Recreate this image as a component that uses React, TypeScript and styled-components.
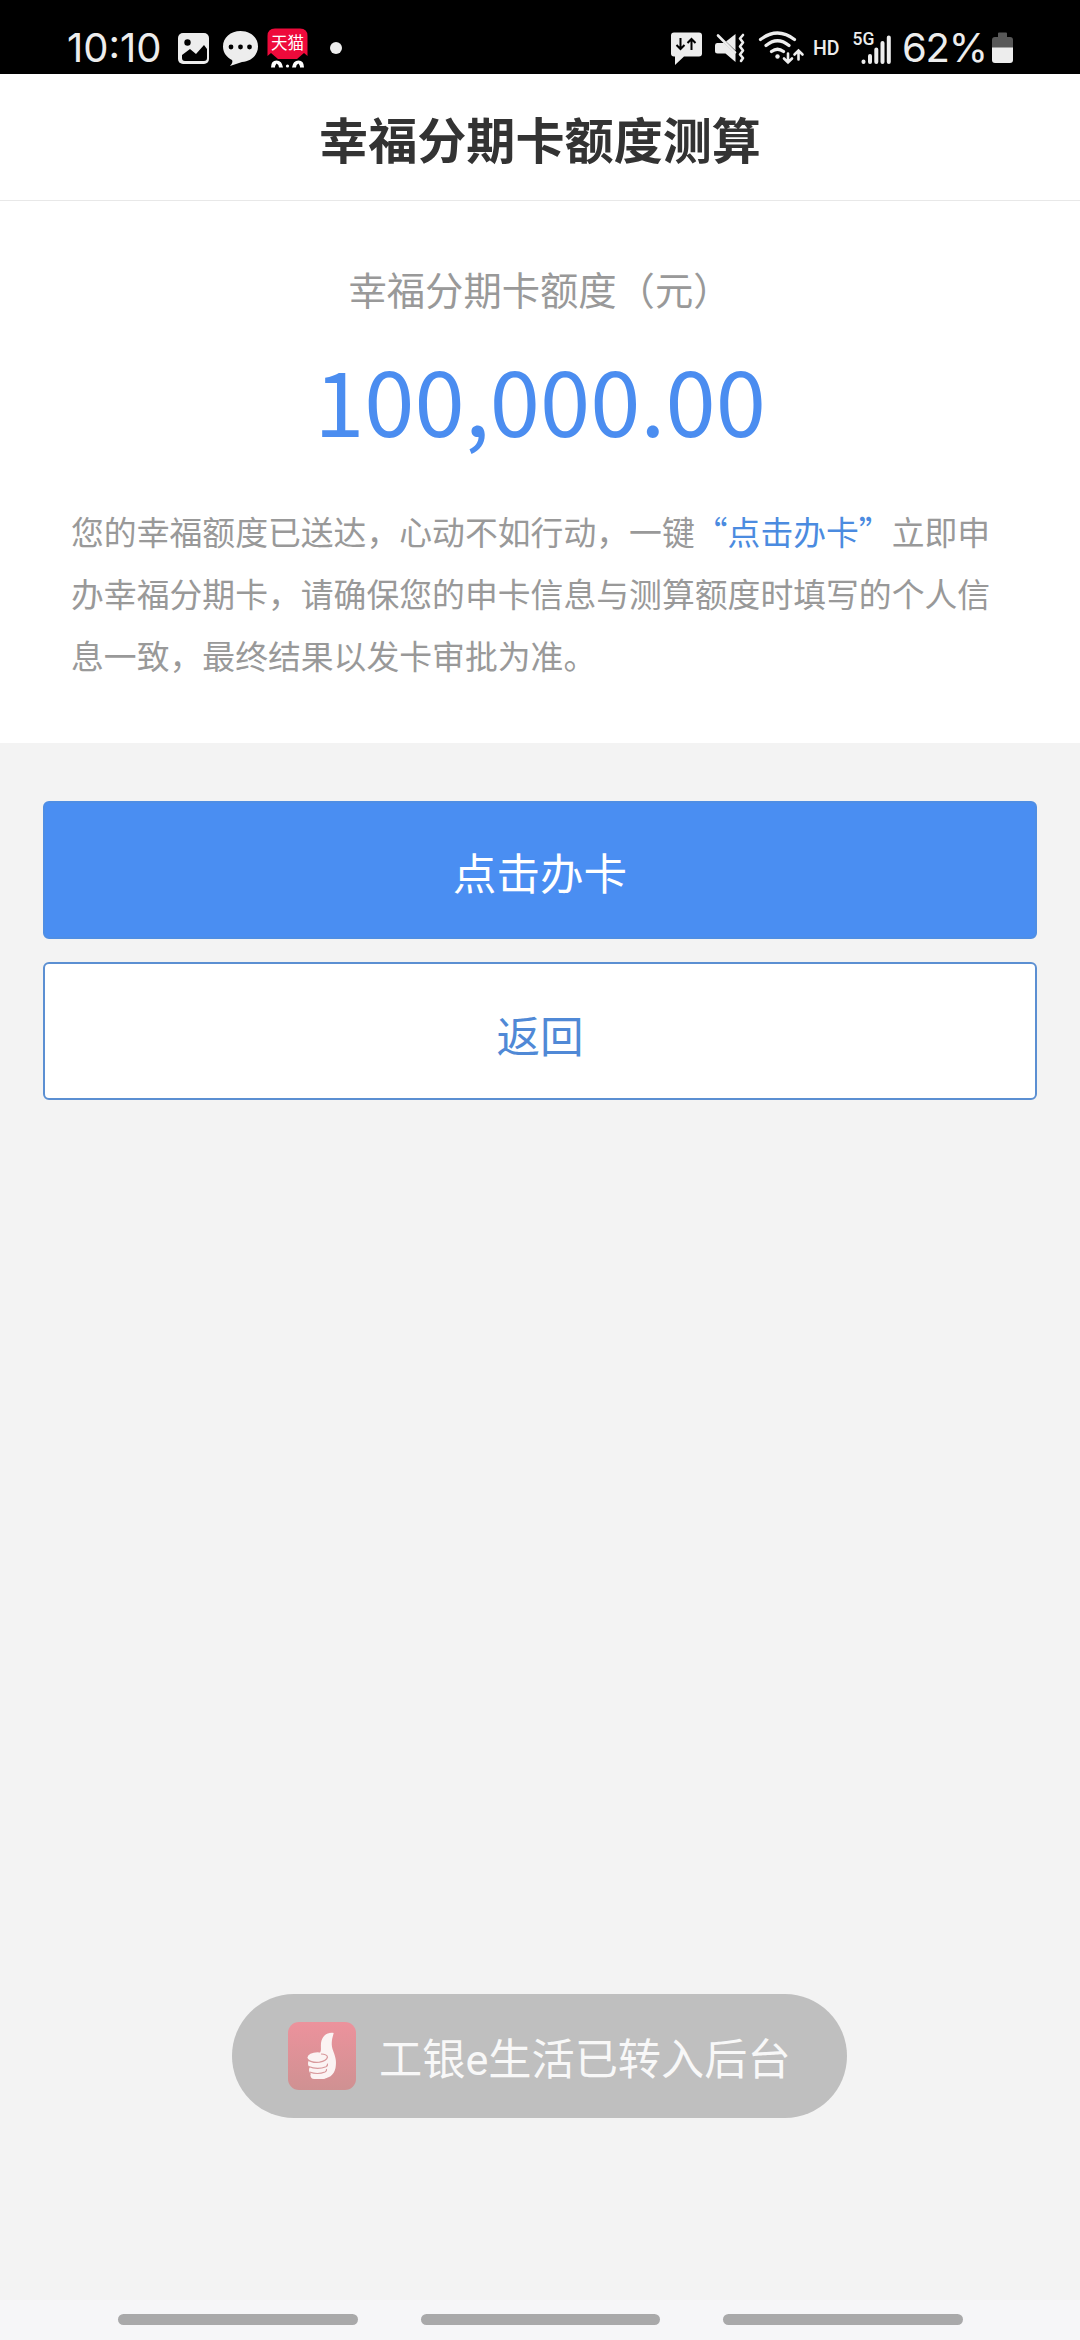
import styled, { createGlobalStyle, css } from "styled-components";

const GlobalStyle = createGlobalStyle`
	* {
		box-sizing: border-box;
	}
	body {
		margin: 0;
		background-color: #f3f3f3;
		font-family: "Noto Sans CJK SC", sans-serif;
	}
`;

const Screen = styled.div`
	display: flex;
	flex-direction: column;
	position: relative;
	width: 1080px;
	height: 2340px;
	background-color: #f3f3f3;
	overflow: hidden;
`;

const StatusBar = styled.div`
	display: flex;
	justify-content: space-between;
	align-items: flex-start;
	height: 74px;
	padding: 24px 66px 0 67px;
	background-color: black;
	color: #ededed;
`;

const StatusGroup = styled.div`
	display: flex;
	height: 50px;
`;

const StatusText = styled.span<{ $width: number; $spacing: number }>`
	width: ${(props) => props.$width}px;
	font-family: Inter, sans-serif;
	font-size: 40px;
	font-weight: 400;
	line-height: 48px;
	letter-spacing: ${(props) => props.$spacing}px;
	white-space: nowrap;
`;

const StatusIcon = styled.svg`
	display: block;
	height: 50px;
	flex-shrink: 0;
`;

const Header = styled.header`
	display: flex;
	align-items: center;
	justify-content: center;
	height: 127px;
	padding-top: 2px;
	background-color: white;
	border-bottom: 1px solid #e8e8e8;
`;

const Title = styled.h1`
	margin: 0;
	color: #333;
	font-size: 49.1px;
	line-height: 72px;
	font-weight: 700;
`;

const Quota = styled.section`
	display: flex;
	flex-direction: column;
	align-items: center;
	height: 542px;
	padding: 60px 70px 0;
	background-color: white;
`;

const QuotaLabel = styled.p`
	margin: 0;
	color: #999;
	font-size: 38.3px;
	line-height: 56px;
`;

const Amount = styled.p`
	margin: 16px 0 0;
	color: #4b8df0;
	font-size: 90.4px;
	line-height: 130px;
`;

const Notice = styled.p`
	margin: 37px 0 0;
	width: 938px;
	color: #999;
	font-size: 32.83px;
	line-height: 62px;
`;

const NoticeLine = styled.span`
	display: block;
	white-space: nowrap;
`;

const Highlight = styled.span`
	color: #4b8be0;
`;

const Actions = styled.div`
	display: flex;
	flex-direction: column;
	gap: 23px;
	padding: 58px 43px 0;
`;

const Button = styled.button<{ $primary?: boolean }>`
	height: 138px;
	padding: 5px 0 0;
	border: 2px solid #5b8fd2;
	border-radius: 6px;
	background-color: white;
	color: #5089d6;
	font-family: inherit;
	font-size: 43.6px;
	line-height: 64px;
	${(props) =>
		props.$primary &&
		css`
			padding-top: 1px;
			border-color: #4f8ee4;
			background-color: #4a8ef2;
			color: white;
		`}
`;

const Toast = styled.div`
	position: absolute;
	top: 1994px;
	left: 232px;
	display: flex;
	align-items: center;
	width: 615px;
	height: 124px;
	padding-left: 56px;
	border-radius: 62px;
	background-color: #bfbfbf;
	color: #f8f8f8;
	font-family: Roboto, "Noto Sans CJK SC", sans-serif;
	font-size: 43.2px;
	line-height: 64px;
	white-space: nowrap;
`;

const ToastText = styled.span`
	margin: 10px 0 0 23px;
`;

const NavBar = styled.nav`
	display: flex;
	gap: 63px;
	height: 40px;
	margin-top: auto;
	padding: 14px 0 0 118px;
	background-color: #f6f6f8;
`;

const NavPill = styled.span`
	width: 239.5px;
	height: 11px;
	border-radius: 6px;
	background-color: #a9a9aa;
`;

const white = "#ededed";

// The icons share the bar's vertical coordinates, starting at y = 24
function LeftIcons() {
	return (
		<StatusIcon width="180" viewBox="170 24 180 50">
			<rect x="178" y="33" width="31" height="31" rx="5" fill={white} />
			<circle cx="187.5" cy="42.5" r="3.2" fill="black" />
			<path d="M182 55l8-6 6 5 8-9 3 4v9q0 3-3 3h-19q-3 0-3-3z" fill="black" />
			<path
				d="M240.5 31c10 0 17.500 6.500 17.500 15.500s-7.500 15-16 15.500l-12 4c2-2 3-4 2-6-5-2.500-9-7-9-13.500 0-9 7.500-15.500 17.500-15.500z"
				fill={white}
			/>
			<circle cx="231" cy="47" r="2.4" fill="black" />
			<circle cx="240.5" cy="47" r="2.4" fill="black" />
			<circle cx="249.5" cy="47" r="2.4" fill="black" />
			<path
				d="M275 28.500h25q7.500 0 7.500 7.500v20l-3.500-3-7 6h-19l-7-6-3.500 3v-20q0-7.500 7.500-7.500z"
				fill="#ee0a3b"
			/>
			<text x="287.5" y="49" fill="white" fontSize="16.5" textAnchor="middle">
				天猫
			</text>
			<path
				d="M271 67.500q0-7 5.500-7t6.500 7h-4q0-3-2.500-4-1.500 2-1.500 4z"
				fill="white"
			/>
			<path
				d="M304 67.500q0-7-5.500-7t-6.500 7h4q0-3 2.500-4 1.500 2 1.500 4z"
				fill="white"
			/>
			<circle cx="287.5" cy="66" r="1.6" fill="white" />
			<circle cx="336" cy="48" r="6" fill={white} />
		</StatusIcon>
	);
}

function RightIcons() {
	return (
		<StatusIcon width="232" viewBox="670 24 232 50">
			<path
				d="M674 32.500h25q3 0 3 3v18q0 3-3 3h-15l-9 8.500v-8.500h-1q-3 0-3-3v-18q0-3 3-3z"
				fill={white}
			/>
			<path
				d="M680.5 38v11m-4-4l4 4 4-4M691.5 50v-11m-4 4l4-4 4 4"
				fill="none"
				stroke="black"
				strokeWidth="2"
			/>
			<path
				d="M717 43h7l11.500 11v8l-10-8.500h-8q-2.500 0-2.500-2.500v-5.500q0-2.500 2-2.500zM735.500 34v16.500l-9.500-9z"
				fill={white}
			/>
			<path d="M718 35.500l17 17" stroke={white} strokeWidth="2.6" strokeLinecap="round" />
			<path
				d="M743 35l-3 3.500 3 4-3 4 3 4-3 4 3 3.500-2 3"
				fill="none"
				stroke={white}
				strokeWidth="2.6"
				strokeLinecap="round"
				strokeLinejoin="round"
			/>
			<g fill="none" stroke={white} strokeWidth="3.2" strokeLinecap="round">
				<path d="M760.5 39.500q17-13 34 0M766 45.500q11.500-9.500 23 0M771.500 51.500q6-4.500 12 0" />
				<path
					d="M788 53.500v9m-4-4l4 4 4-4M798.500 59.500v-9m-4 4l4-4 4 4"
					strokeWidth="2.6"
				/>
			</g>
			<circle cx="777.5" cy="56.5" r="2.2" fill={white} />
			<text
				x="813"
				y="54.5"
				fill={white}
				fontFamily="Roboto, sans-serif"
				fontSize="19.5"
				fontWeight="500"
			>
				HD
			</text>
			<text
				x="852.5"
				y="44.5"
				fill={white}
				fontFamily="Roboto, sans-serif"
				fontSize="17.5"
				fontWeight="500"
			>
				5G
			</text>
			<path
				d="M863.500 61.500v.5M870 56v6M876.300 49.500v12.500M882.500 43v19M888.800 37.500v24.500"
				stroke={white}
				strokeWidth="4"
				strokeLinecap="round"
			/>
		</StatusIcon>
	);
}

function BatteryIcon() {
	return (
		<StatusIcon width="22" viewBox="992 24 22 50">
			<path
				d="M998 33.500q0-1 1-1h7q1 0 1 1v3.500h3q3 0 3 3v8h-21v-8q0-3 3-3h3z"
				fill="#585858"
			/>
			<path d="M992 47.500h21v12.500q0 3-3 3h-15q-3 0-3-3z" fill={white} />
		</StatusIcon>
	);
}

function AppIcon() {
	return (
		<svg width="68" height="68" viewBox="0 0 68 68">
			<defs>
				<linearGradient id="appRed" x1="0" y1="0" x2="0" y2="1">
					<stop offset="0" stopColor="#ec929c" />
					<stop offset="1" stopColor="#cf9192" />
				</linearGradient>
			</defs>
			<rect width="68" height="68" rx="11" fill="url(#appRed)" />
			{/* thumb and back of the hand, then the four fingers */}
			<path
				d="M45.700 11C39 10 34 14 33 21c-.5 6 1 8-2 11l-6 5 3 16 4 4C41 57 46 53 47.500 46c1.500-8-.5-12-3-19-1.500-6-.5-10 1.200-16z"
				fill="#fbf3f3"
			/>
			<g fill="#fbf3f3">
				<rect x="22.5" y="49.5" width="16" height="7.5" rx="3.7" />
				<rect x="21" y="44" width="18" height="8" rx="4" />
				<rect x="20" y="37.500" width="20" height="8" rx="4" />
				<ellipse cx="29.5" cy="35.5" rx="10" ry="5.200" />
			</g>
			<path
				d="M33 32q6 0 6.500 3-1 4-8 5.200-8 .8-11.500-2.500M20.500 44.500q9 3.500 17.500.2 2-1 1.500-3M21.500 50q8 3 15.500 0 2-1 1.500-3"
				fill="none"
				stroke="#d8999c"
				strokeWidth="1.2"
			/>
		</svg>
	);
}

function App() {
	return (
		<Screen>
			<GlobalStyle />
			<StatusBar>
				<StatusGroup>
					<StatusText $width={103} $spacing={0}>
						10:10
					</StatusText>
					<LeftIcons />
				</StatusGroup>
				<StatusGroup>
					<RightIcons />
					<StatusText $width={90} $spacing={-1.2}>
						62%
					</StatusText>
					<BatteryIcon />
				</StatusGroup>
			</StatusBar>
			<Header>
				<Title>幸福分期卡额度测算</Title>
			</Header>
			<Quota>
				<QuotaLabel>幸福分期卡额度（元）</QuotaLabel>
				<Amount>100,000.00</Amount>
				<Notice>
					<NoticeLine>
						您的幸福额度已送达，心动不如行动，一键<Highlight>“点击办卡”</Highlight>立即申
					</NoticeLine>
					<NoticeLine>办幸福分期卡，请确保您的申卡信息与测算额度时填写的个人信</NoticeLine>
					<NoticeLine>息一致，最终结果以发卡审批为准。</NoticeLine>
				</Notice>
			</Quota>
			<Actions>
				<Button $primary>点击办卡</Button>
				<Button>返回</Button>
			</Actions>
			<Toast>
				<AppIcon />
				<ToastText>工银e生活已转入后台</ToastText>
			</Toast>
			<NavBar>
				<NavPill />
				<NavPill />
				<NavPill />
			</NavBar>
		</Screen>
	);
}

export default App;
